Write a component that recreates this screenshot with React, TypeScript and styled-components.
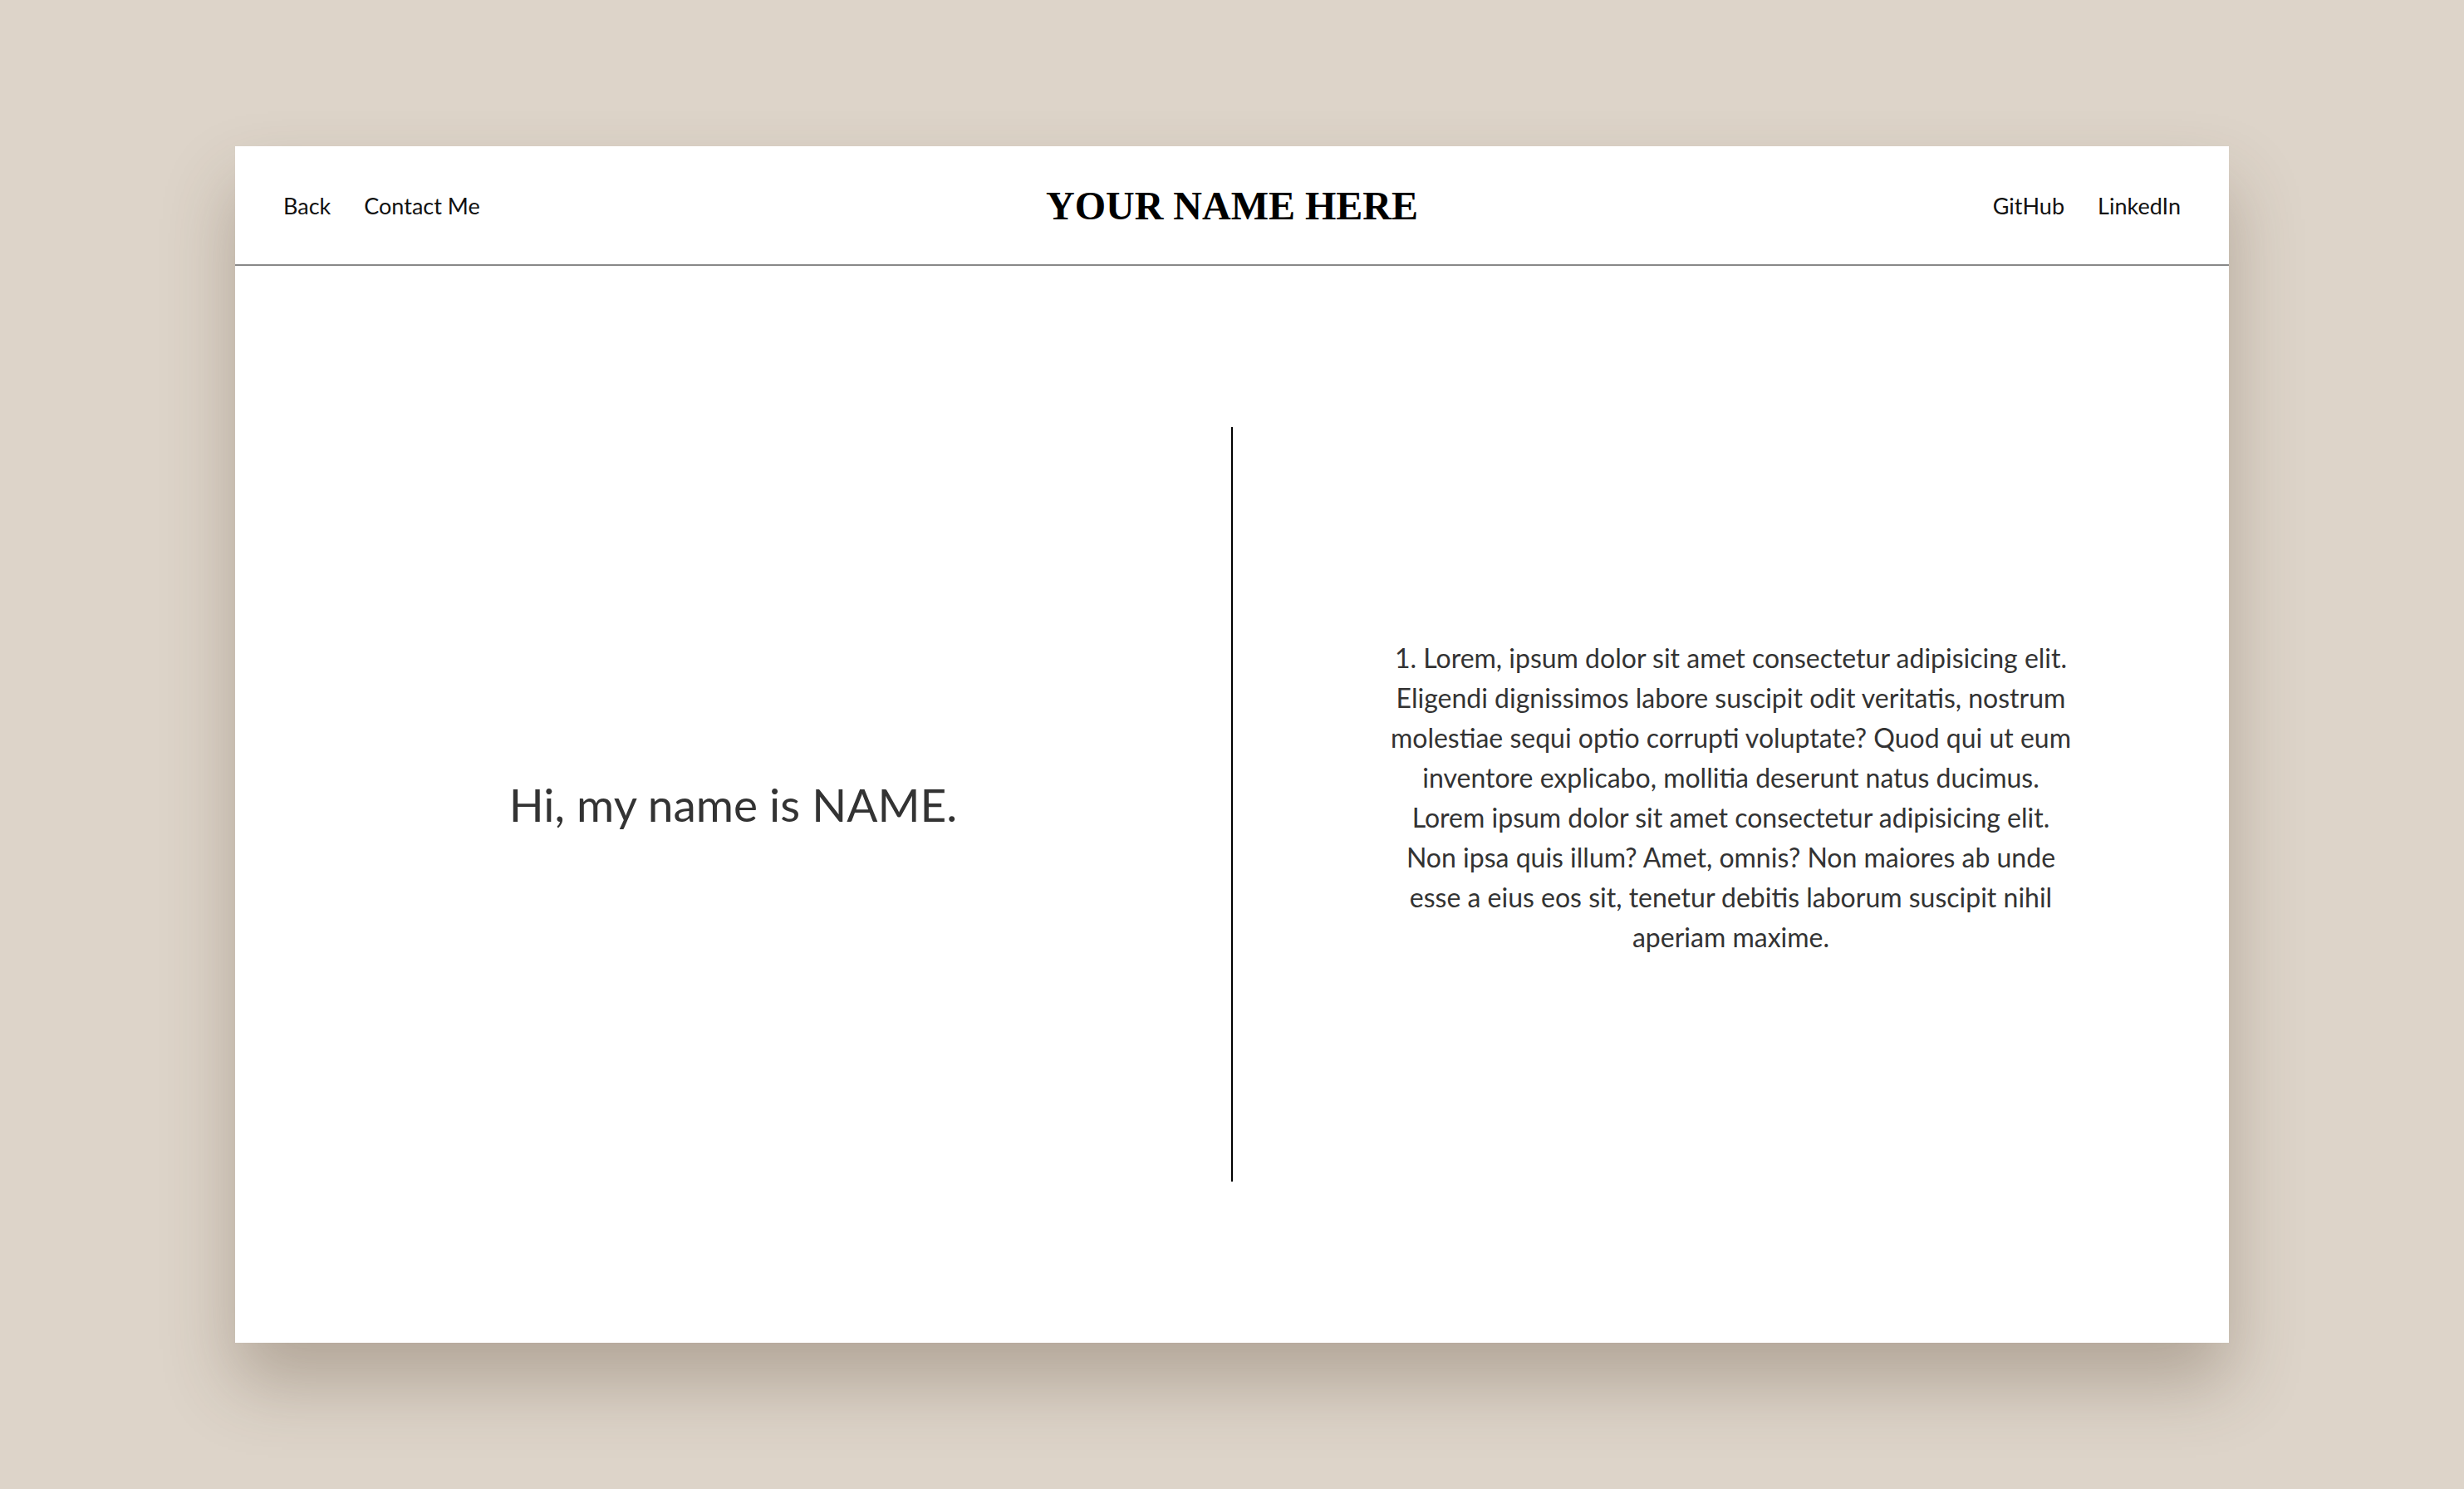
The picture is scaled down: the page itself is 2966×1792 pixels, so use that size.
import styled, { createGlobalStyle } from "styled-components";

const GlobalStyle = createGlobalStyle`
  html, body {
    margin: 0;
    padding: 0;
  }
  body {
    background-color: #ddd4c9;
    font-family: "Lato", "Noto Sans", sans-serif;
  }
`;

const App = () => {
  return (
    <>
      <GlobalStyle />
      <Page>
        <Card>
          <Header>
            <NavGroup>
              <NavLink href="#">Back</NavLink>
              <NavLink href="#">Contact Me</NavLink>
            </NavGroup>
            <Title>YOUR NAME HERE</Title>
            <NavGroup align="end">
              <NavLink href="#">GitHub</NavLink>
              <NavLink href="#">LinkedIn</NavLink>
            </NavGroup>
          </Header>

          <Main>
            <Column>
              <Greeting>Hi, my name is NAME.</Greeting>
            </Column>
            <Divider />
            <Column>
              <Bio>
                1. Lorem, ipsum dolor sit amet consectetur adipisicing elit.
                Eligendi dignissimos labore suscipit odit veritatis, nostrum
                molestiae sequi optio corrupti voluptate? Quod qui ut eum
                inventore explicabo, mollitia deserunt natus ducimus. Lorem ipsum
                dolor sit amet consectetur adipisicing elit. Non ipsa quis illum?
                Amet, omnis? Non maiores ab unde esse a eius eos sit, tenetur
                debitis laborum suscipit nihil aperiam maxime.
              </Bio>
            </Column>
          </Main>
        </Card>
      </Page>
    </>
  );
};

export default App;

const Page = styled.div`
  min-height: 100vh;
  display: flex;
  align-items: center;
  justify-content: center;
`;

const Card = styled.div`
  width: 2400px;
  height: 1440px;
  background: #fff;
  display: flex;
  flex-direction: column;
  box-shadow: 0 48px 80px rgba(80, 60, 40, 0.3);
`;

const Header = styled.header`
  height: 142px;
  flex-shrink: 0;
  display: flex;
  align-items: center;
  padding: 0 58px;
  border-bottom: 2px solid #888;
`;

const NavGroup = styled.nav<{ align?: "start" | "end" }>`
  flex: 1;
  display: flex;
  gap: 40px;
  justify-content: ${(props) => (props.align === "end" ? "flex-end" : "flex-start")};
`;

const NavLink = styled.a`
  color: #111;
  text-decoration: none;
  font-size: 27px;
  cursor: pointer;

  &:hover {
    opacity: 0.7;
  }
`;

const Title = styled.h1`
  margin: 0;
  font-family: "Liberation Serif", "Times New Roman", serif;
  font-weight: 700;
  font-size: 48px;
  color: #000;
`;

const Main = styled.main`
  flex: 1;
  display: flex;
  align-items: center;
`;

const Column = styled.section`
  flex: 1;
  display: flex;
  justify-content: center;
  align-items: center;
`;

const Divider = styled.div`
  width: 2px;
  height: 70%;
  background: #000;
`;

const Greeting = styled.h2`
  margin: 0;
  font-weight: 400;
  font-size: 55px;
  color: #333;
`;

const Bio = styled.p`
  margin: 0 0 16px;
  max-width: 825px;
  text-align: center;
  font-size: 32px;
  line-height: 48px;
  color: #333;
`;
